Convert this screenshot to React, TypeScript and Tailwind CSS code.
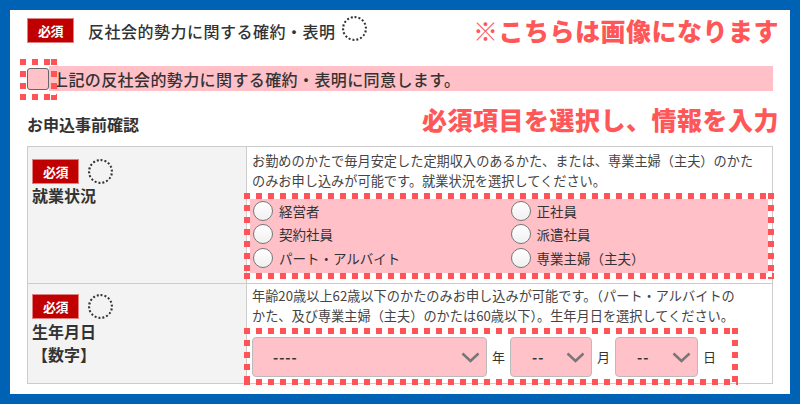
import React from "react"

// red square-dash frame drawn with four repeating gradients (top, bottom, left, right)
const dashFrame =
  "bg-no-repeat [background-image:repeating-linear-gradient(90deg,#ff5358_0_6px,transparent_6px_12px),repeating-linear-gradient(90deg,#ff5358_0_6px,transparent_6px_12px),repeating-linear-gradient(180deg,#ff5358_0_6px,transparent_6px_12px),repeating-linear-gradient(180deg,#ff5358_0_6px,transparent_6px_12px)] [background-size:100%_6px,100%_6px,6px_100%,6px_100%] [background-position:0_0,0_100%,0_0,100%_0]"

function RequiredBadge() {
  return (
    <span className="inline-flex w-[47px] h-[25px] items-center justify-center bg-[#c00000] border border-[#e08080] text-white text-[13px] font-bold leading-none tracking-[-0.5px]">
      必須
    </span>
  )
}

function DottedCircle() {
  return <span className="inline-block w-[25px] h-[25px] rounded-full border-2 border-dotted border-[#333]" />
}

function Radio({ label }: { label: string }) {
  return (
    <label className="flex items-center h-[23.5px] gap-[6px]">
      <span className="w-[20px] h-[20px] rounded-full border border-[#777] bg-gradient-to-b from-white to-[#f0f0f0]" />
      <span className="text-[13.5px] text-[#333]">{label}</span>
    </label>
  )
}

function Chevron() {
  return (
    <svg width="19" height="11" viewBox="0 0 19 11" className="shrink-0">
      <polyline points="1.5,1.5 9.5,9 17.5,1.5" fill="none" stroke="#777" strokeWidth="2.5" />
    </svg>
  )
}

function PinkSelect({ value, width, pad }: { value: string; width: string; pad: string }) {
  return (
    <div className={`${width} ${pad} h-[40px] flex items-center justify-between pr-[6px] bg-[#ffc2c9] border border-[#bbb] rounded-[4px]`}>
      <span className="text-[14px] font-bold text-[#333] tracking-[1px]">{value}</span>
      <Chevron />
    </div>
  )
}

export default function App() {
  return (
    <div className="w-[800px] h-[404px] bg-[#0062b5] p-[10px] font-['Noto_Sans_CJK_JP',sans-serif] text-[#333]">
      <div className="h-full bg-white pt-[8px] px-[17px]">
        {/* heading */}
        <div className="flex items-center justify-between h-[25px]">
          <div className="flex items-center">
            <RequiredBadge />
            <span className="ml-[14px] text-[16px] font-medium tracking-[0.5px]">反社会的勢力に関する確約・表明</span>
            <span className="ml-[6px]"><DottedCircle /></span>
          </div>
          <span className="-mr-[6px] text-[25px] font-black text-[#ff5757] tracking-[0.5px]">※こちらは画像になります</span>
        </div>

        {/* agreement checkbox */}
        <div className="flex items-center mt-[23px] h-[25px]">
          <div className="relative">
            <div className={`absolute -left-[7px] -top-[9px] w-[37px] h-[41px] ${dashFrame}`} />
            <span className="relative block w-[22px] h-[22px] rounded-[3px] border-[1.5px] border-[#666] bg-[#ffc2c9]" />
          </div>
          <div className="flex-1 h-[25px] flex items-center pl-[3px] bg-[#ffc0c8] text-[16px] font-medium tracking-[0.4px]">
            上記の反社会的勢力に関する確約・表明に同意します。
          </div>
        </div>

        {/* section heading */}
        <div className="flex items-center justify-between h-[30px] mt-[14px]">
          <span className="mt-[7px] text-[16px] font-bold">お申込事前確認</span>
          <span className="-mr-[6px] text-[25px] font-black text-[#ff5757] tracking-[0.5px]">必須項目を選択し、情報を入力</span>
        </div>

        {/* form table */}
        <div className="mt-[11px] border border-[#ccc] w-[746px]">
          <div className="flex h-[136px]">
            <div className="w-[219px] shrink-0 bg-[#f3f3f3] border-r border-[#ccc] pt-[12px] pl-[4px]">
              <div className="flex items-center gap-[9px]">
                <RequiredBadge />
                <DottedCircle />
              </div>
              <div className="text-[16px] font-bold leading-[23px]">就業状況</div>
            </div>
            <div className="flex-1 pl-[5px] pt-[4px]">
              <p className="text-[13.2px] leading-[20px] text-[#444] whitespace-nowrap">
                お勤めのかたで毎月安定した定期収入のあるかた、または、専業主婦（主夫）のかた
                <br />
                のみお申し込みが可能です。就業状況を選択してください。
              </p>
              <div className={`mt-[2px] -ml-[8px] w-[530px] p-[6px] ${dashFrame}`}>
                <div className="grid grid-cols-2 bg-[#ffc0c8] pl-[3px] pb-[3px]">
                  <Radio label="経営者" />
                  <Radio label="正社員" />
                  <Radio label="契約社員" />
                  <Radio label="派遣社員" />
                  <Radio label="パート・アルバイト" />
                  <Radio label="専業主婦（主夫）" />
                </div>
              </div>
            </div>
          </div>

          <div className="flex h-[100px] border-t border-[#ccc]">
            <div className="w-[219px] shrink-0 bg-[#f3f3f3] border-r border-[#ccc] pt-[10px] pl-[4px]">
              <div className="flex items-center gap-[9px]">
                <RequiredBadge />
                <DottedCircle />
              </div>
              <div className="text-[16px] font-bold leading-[23px] mt-[1px]">生年月日</div>
              <div className="text-[16px] font-bold leading-[23px]">【数字】</div>
            </div>
            <div className="flex-1 pl-[5px] pt-[2px]">
              <p className="text-[13.2px] leading-[20px] text-[#444] whitespace-nowrap">
                年齢20歳以上62歳以下のかたのみお申し込みが可能です。（パート・アルバイトの
                <br />
                かた、及び専業主婦（主夫）のかたは60歳以下）。生年月日を選択してください。
              </p>
              <div className={`relative mt-[2px] -ml-[8px] w-[494px] h-[57px] p-[6px] ${dashFrame}`}>
                <div className="flex items-center h-full pl-[2px] pt-[1px] text-[13px] text-[#333]">
                  <PinkSelect value="----" width="w-[235px]" pad="pl-[20px]" />
                  <span className="mx-[5px]">年</span>
                  <PinkSelect value="--" width="w-[82px]" pad="pl-[21px]" />
                  <span className="mx-[5px]">月</span>
                  <PinkSelect value="--" width="w-[83px]" pad="pl-[21px]" />
                  <span className="ml-[5px]">日</span>
                </div>
              </div>
            </div>
          </div>
        </div>
      </div>
    </div>
  )
}
